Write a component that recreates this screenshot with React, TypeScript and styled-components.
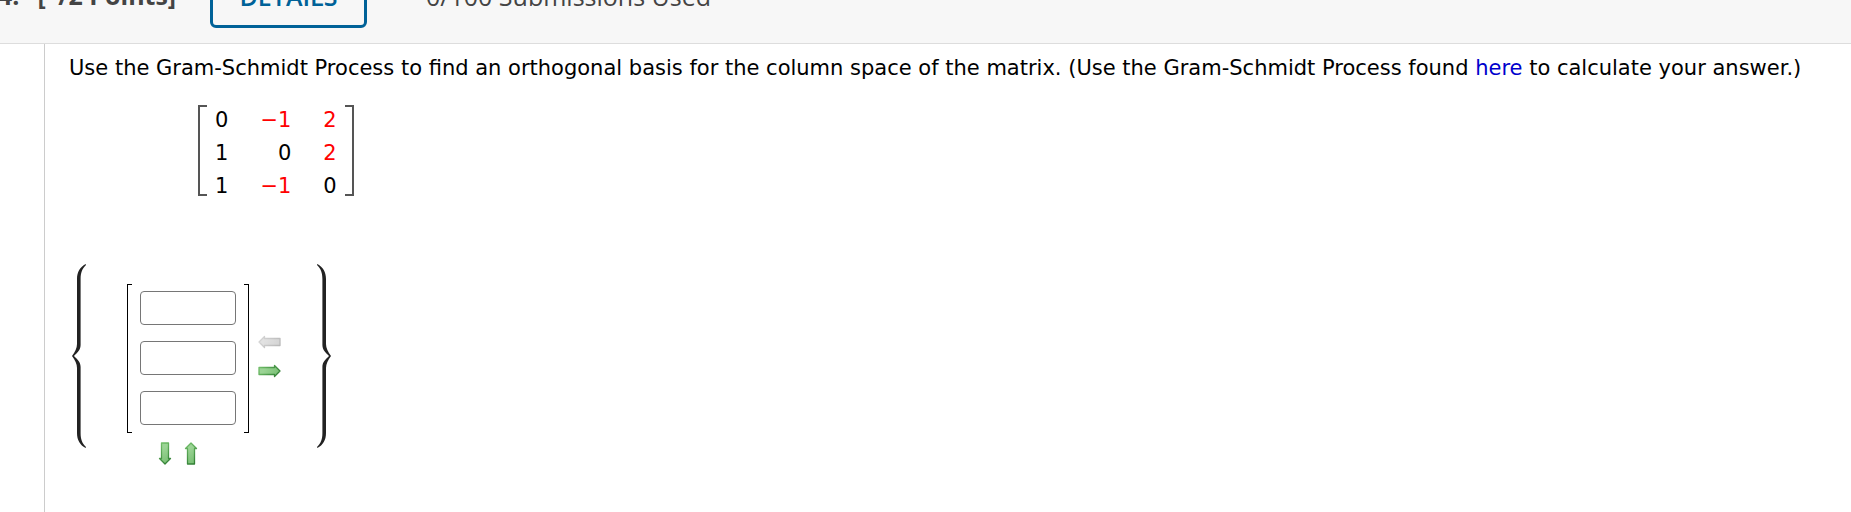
import React from "react";
import styled, { createGlobalStyle } from "styled-components";

const GlobalStyle = createGlobalStyle`
  *, *::before, *::after { box-sizing: border-box; }
  html, body, #root { height: 100%; }
  body {
    margin: 0;
    background: #fff;
    color: #000;
    font-family: Verdana, "DejaVu Sans", sans-serif;
    font-size: 21px;
    line-height: 32px;
  }
`;

const Page = styled.div`
  display: flex;
  flex-direction: column;
  min-height: 100%;
`;

const Header = styled.header`
  display: flex;
  align-items: flex-end;
  height: 44px;
  padding-bottom: 15px;
  overflow: hidden;
  background: #f7f7f7;
  border-bottom: 1px solid #ddd;
  color: #444;
  font-family: "Open Sans", sans-serif;
  font-size: 25px;
  white-space: pre;
`;

const Heading = styled.h2`
  display: flex;
  gap: 18px;
  width: 212px;
  margin: 0 0 17px -2px;
  font-size: 25px;
  line-height: 32px;
`;

const DetailsButton = styled.button`
  width: 157px;
  height: 64px;
  padding: 0;
  border: 3px solid #006298;
  border-radius: 6px;
  background: #f7f7f7;
  color: #006298;
  font: 600 25px/32px "Open Sans", sans-serif;
`;

const Submissions = styled.span`
  margin: 0 0 16px 59px;
`;

const Body = styled.main`
  flex: 1;
  margin-left: 44px;
  padding: 8px 24px;
  border-left: 1px solid #ccc;
`;

const Prompt = styled.p`
  margin: 0;
`;

const Link = styled.a`
  color: #00c;
  text-decoration: none;
`;

const MatrixRow = styled.div`
  display: flex;
  width: max-content;
  margin: 21px 0 0 129px;
`;

const Bracket = styled.span<{ $side: "left" | "right"; $weight: number; $color: string; $width: number }>`
  width: ${(p) => p.$width}px;
  border: solid ${(p) => p.$color};
  border-width: ${(p) => p.$weight}px;
  border-${(p) => (p.$side === "left" ? "right" : "left")}-width: 0;
`;

const Matrix = styled.table`
  border-collapse: collapse;
  margin: -1px 8px -7px;
  line-height: 33px;
`;

const Cell = styled.td<{ $red?: boolean }>`
  padding: 0 0 0 32px;
  text-align: right;
  color: ${(p) => (p.$red ? "#f00" : "#000")};
  &:first-child { padding-left: 0; }
`;

const AnswerSet = styled.form`
  display: flex;
  align-items: flex-start;
  margin: 68px 0 0 3px;
`;

const VectorColumn = styled.div`
  display: flex;
  flex-direction: column;
  align-items: center;
  gap: 9px;
  margin: 20px 9px 0 40px;
`;

const Vector = styled.div`
  display: flex;
`;

const Inputs = styled.div`
  display: flex;
  flex-direction: column;
  gap: 16px;
  padding: 7px 8px 8px;
`;

const Entry = styled.input`
  width: 96px;
  height: 34px;
  padding: 2px 6px;
  border: 1px solid #767676;
  border-radius: 4px;
  background: #fff;
  font: inherit;
`;

const RowControls = styled.div`
  display: flex;
  gap: 12px;
  margin-right: 20px;
`;

const ColumnControls = styled.div`
  display: flex;
  flex-direction: column;
  gap: 15px;
  margin: 71px 35px 0 0;
`;

const ArrowButton = styled.button`
  display: block;
  padding: 0;
  border: 0;
  background: none;
  line-height: 0;
  cursor: pointer;
  &:disabled { cursor: default; }
`;

type Direction = "up" | "down" | "left" | "right";

const shapes: Record<Direction, string> = {
  right: "M1 3.500 H16.500 V1.500 L22 7 L16.500 12.500 V10.500 H1 Z",
  left: "M22 3.500 H6.500 V1.500 L1 7 L6.500 12.500 V10.500 H22 Z",
  down: "M3.500 1 V16.500 H1.500 L7 22 L12.500 16.500 H10.500 V1 Z",
  up: "M3.500 22 V6.500 H1.500 L7 1 L12.500 6.500 H10.500 V22 Z",
};

function Arrow({ dir, disabled, label }: { dir: Direction; disabled?: boolean; label: string }) {
  const flat = dir === "left" || dir === "right";
  const [w, h] = flat ? [23, 14] : [14, 23];
  const [light, mid, edge, dark] = disabled
    ? ["#e2e2e2", "#d0d0d0", "#d6d6d6", "#b8b8b8"]
    : ["#9bd495", "#6fb96a", "#70bd68", "#2f7d33"];
  const id = `fill-${dir}`;
  return (
    <ArrowButton type="button" disabled={disabled} aria-label={label}>
      <svg width={w} height={h} viewBox={`0 0 ${w} ${h}`} aria-hidden="true">
        <defs>
          <linearGradient id={`${id}-edge`} gradientUnits="userSpaceOnUse" x1="0" y1="0" x2={w} y2={h}>
            <stop offset="0.1" stopColor={edge} />
            <stop offset="0.9" stopColor={dark} />
          </linearGradient>
          <linearGradient id={id} gradientUnits="userSpaceOnUse" x1="0" y1="0" x2={w} y2={h}>
            <stop offset="0.3" stopColor={light} />
            <stop offset="1" stopColor={mid} />
          </linearGradient>
        </defs>
        <path d={shapes[dir]} fill={`url(#${id})`} stroke={`url(#${id}-edge)`} strokeWidth="1.3" strokeLinejoin="round" />
      </svg>
    </ArrowButton>
  );
}

function Brace({ flip }: { flip?: boolean }) {
  return (
    <svg width="15" height="184" viewBox="0 0 15 184" aria-hidden="true">
      <path
        transform={flip ? "translate(15 0) scale(-1 1)" : undefined}
        d="M13.6 0 C8 3 5 8 5 15 V80 C5 84 3 88 0 92 C3 96 5 100 5 104 V169 C5 176 8 181 13.6 184 L14 183 C10 179 8.600 175 8.600 169 V103 C8.600 98 5 95 2 92 C5 89 8.600 86 8.600 81 V15 C8.600 9 10 5 14 1 Z"
        fill="#222"
      />
    </svg>
  );
}

const rows = [
  [{ v: "0" }, { v: "−1", red: true }, { v: "2", red: true }],
  [{ v: "1" }, { v: "0" }, { v: "2", red: true }],
  [{ v: "1" }, { v: "−1", red: true }, { v: "0" }],
];

export default function App() {
  return (
    <>
      <GlobalStyle />
      <Page>
        <Header>
          <Heading>
            <span>4.</span>
            <span>[–/2 Points]</span>
          </Heading>
          <DetailsButton type="button">DETAILS</DetailsButton>
          <Submissions>0/100 Submissions Used</Submissions>
        </Header>
        <Body>
          <Prompt>
            Use the Gram-Schmidt Process to find an orthogonal basis for the column space of the matrix. (Use the
            Gram-Schmidt Process found <Link href="#gram-schmidt">here</Link> to calculate your answer.)
          </Prompt>
          <MatrixRow>
            <Bracket $side="left" $weight={2} $color="#555" $width={9} />
            <Matrix>
              <tbody>
                {rows.map((row, r) => (
                  <tr key={r}>
                    {row.map((cell, c) => (
                      <Cell key={c} $red={"red" in cell && cell.red}>{cell.v}</Cell>
                    ))}
                  </tr>
                ))}
              </tbody>
            </Matrix>
            <Bracket $side="right" $weight={2} $color="#555" $width={9} />
          </MatrixRow>
          <AnswerSet onSubmit={(e) => e.preventDefault()}>
            <Brace />
            <VectorColumn>
              <Vector>
                <Bracket $side="left" $weight={1} $color="#000" $width={5} />
                <Inputs>
                  {[1, 2, 3].map((n) => (
                    <Entry key={n} type="text" aria-label={`Vector 1, entry ${n}`} />
                  ))}
                </Inputs>
                <Bracket $side="right" $weight={1} $color="#000" $width={5} />
              </Vector>
              <RowControls>
                <Arrow dir="down" label="Add row" />
                <Arrow dir="up" label="Remove row" />
              </RowControls>
            </VectorColumn>
            <ColumnControls>
              <Arrow dir="left" disabled label="Remove column" />
              <Arrow dir="right" label="Add column" />
            </ColumnControls>
            <Brace flip />
          </AnswerSet>
        </Body>
      </Page>
    </>
  );
}
